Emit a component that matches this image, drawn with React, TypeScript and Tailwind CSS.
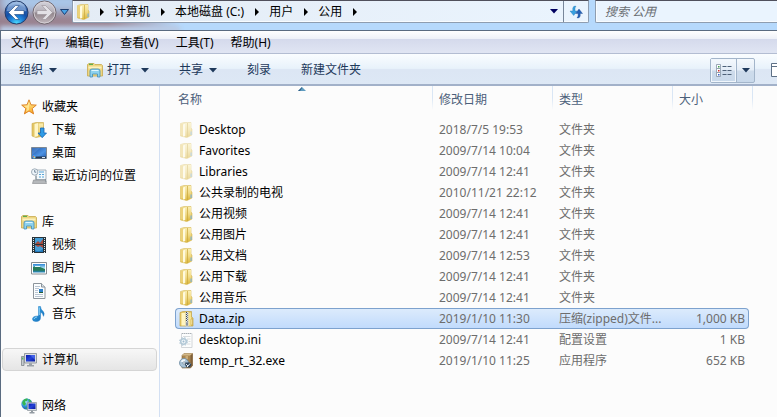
import React from "react";

const Svg = ({ children, w = 16, h = 16 }: { children: React.ReactNode; w?: number; h?: number }) => (
  <svg width={w} height={h} viewBox={`0 0 ${w} ${h}`} className="block shrink-0" aria-hidden="true">
    {children}
  </svg>
);

const Gradients = () => (
  <svg width="0" height="0" className="absolute" aria-hidden="true">
    <defs>
      <linearGradient id="gold" x1="0" x2="0" y1="0" y2="1">
        <stop offset="0" stopColor="#f3e39c" />
        <stop offset="1" stopColor="#d9b843" />
      </linearGradient>
      <linearGradient id="flap" x1="0" x2="0" y1="0" y2="1">
        <stop offset="0" stopColor="#fbeeb0" />
        <stop offset="0.5" stopColor="#f0d984" />
        <stop offset="1" stopColor="#dcb83e" />
      </linearGradient>
      <radialGradient id="back" cx="0.5" cy="0.98" r="0.95">
        <stop offset="0" stopColor="#4fe0ff" />
        <stop offset="0.3" stopColor="#1f86dc" />
        <stop offset="0.55" stopColor="#1450a8" />
        <stop offset="0.8" stopColor="#2a5fae" />
        <stop offset="1" stopColor="#9dbfe6" />
      </radialGradient>
      <linearGradient id="forward" x1="0" x2="0" y1="0" y2="1">
        <stop offset="0" stopColor="#d6d5dd" />
        <stop offset="0.48" stopColor="#b3aeb6" />
        <stop offset="0.52" stopColor="#92878d" />
        <stop offset="1" stopColor="#c2b8be" />
      </linearGradient>
      <linearGradient id="screen" x1="0" x2="1" y1="0" y2="1">
        <stop offset="0" stopColor="#0a1cae" />
        <stop offset="0.5" stopColor="#2342d8" />
        <stop offset="1" stopColor="#0a1a9c" />
      </linearGradient>
      <linearGradient id="desk" x1="0" x2="1" y1="0" y2="1">
        <stop offset="0" stopColor="#1c4f9f" />
        <stop offset="0.6" stopColor="#4d93e4" />
        <stop offset="1" stopColor="#255dac" />
      </linearGradient>
      <linearGradient id="star" x1="0" x2="0" y1="0" y2="1">
        <stop offset="0" stopColor="#fff3a0" />
        <stop offset="1" stopColor="#f9a51e" />
      </linearGradient>
      <linearGradient id="sky" x1="0" x2="0" y1="0" y2="1">
        <stop offset="0" stopColor="#2d86d6" />
        <stop offset="0.55" stopColor="#bfeef5" />
        <stop offset="0.6" stopColor="#23704d" />
        <stop offset="1" stopColor="#2c8bc4" />
      </linearGradient>
      <linearGradient id="note" x1="0" x2="1" y1="0" y2="1">
        <stop offset="0" stopColor="#45b4ee" />
        <stop offset="1" stopColor="#0d66b4" />
      </linearGradient>
      <radialGradient id="globe" cx="0.35" cy="0.3" r="0.8">
        <stop offset="0" stopColor="#c8f0ff" />
        <stop offset="0.5" stopColor="#2f92dc" />
        <stop offset="1" stopColor="#11449a" />
      </radialGradient>
    </defs>
  </svg>
);

const Folder = () => (
  <Svg>
    <path d="M1.500 1.500 5 .5h7V6l1 1v6l-5 2.500-6.500-1.500z" fill="url(#gold)" stroke="#d6bb5c" strokeWidth=".6" />
    <path d="M1.500 2H4v11.500H1.500z" fill="#ecd27a" />
    <path d="M4 2.500 6.500 1.500v12.500l-2.500.5z" fill="#fffadd" />
    <path d="M6.500 1.500 9 .7v13.800l-2.500 1z" fill="url(#flap)" />
    <path d="M8.500 1v14" stroke="#c9a63a" strokeWidth=".7" />
    <path d="M9 1h3v12l-3 1.800z" fill="url(#flap)" />
    <path d="M11.500 9.500h1.200v3.500h-1.200z" fill="#7fb4dd" />
  </Svg>
);

const LibraryFolder = () => (
  <Svg>
    <path d="M.5 2.500 2 1.500h5l1 1h6.500l1 1v10.500H.5z" fill="#eed680" stroke="#c8a94e" strokeWidth=".8" />
    <path d="M2 2.300h4" stroke="#37a440" />
    <path d="M1.500 4.500h13v2h-13z" fill="#fbf1bd" />
    <path d="M3 15V9q0-2 2-2h6q2 0 2 2v6h-2.500v-3h-5v3z" fill="#8ed2ee" stroke="#438eb9" strokeWidth=".8" />
    <path d="M4.500 8.500h7" stroke="#dff7ff" />
  </Svg>
);

const Star = () => (
  <Svg>
    <path d="m8 .8 2 5 5.300.3-4.100 3.500 1.400 5.300L8 12l-4.600 2.900 1.400-5.300L.7 6.100 6 5.800z" fill="url(#star)" stroke="#d97a1c" strokeWidth=".9" strokeLinejoin="round" />
    <path d="M8 3v8L5 13l1-4-3-2.300 4-.2z" fill="#fff6b8" opacity=".6" />
  </Svg>
);

const Download = () => (
  <Svg>
    <path d="M1 1.500 5 .5h7.500V14L5 15.500 1 14z" fill="#e3c665" stroke="#c9a94a" strokeWidth=".6" />
    <path d="M3.500 2 7 1v13l-3.500 1z" fill="#fff6c8" />
    <path d="M7.500 1.500h4.500v12l-4.500 1z" fill="url(#flap)" />
    <path d="M9.500 6h3.500v5h2.500L11.200 15.700 7 11h2.500z" fill="#2f9be6" stroke="#1766b4" strokeWidth=".8" />
  </Svg>
);

const Desktop = () => (
  <Svg>
    <path d="M.5 2.500h15v11H.5z" fill="url(#desk)" stroke="#7d8894" />
    <path d="M1 11.500h14v2H1z" fill="#26384f" />
    <path d="m1 10 8-7H1z" fill="#79aeea" opacity=".3" />
    <circle cx="3" cy="12" r="1.800" fill="#54a9ee" />
    <path d="M2 11h1v1H2z" fill="#f06437" />
    <path d="M3 12h1v1H3z" fill="#ffd94d" />
    <path d="M11 12.500h3" stroke="#dbe5ef" />
  </Svg>
);

const Recent = () => (
  <Svg>
    <path d="M5 2h10v9.500H5z" fill="#f3f8fb" stroke="#8fa0ac" strokeWidth=".8" />
    <path d="M8 4h5M8 6.500h2M11 6.500h2M8 9h2M11 9h2" stroke="#55a4d8" />
    <path d="M2.500 12h12l1 3.500h-14z" fill="#b5b8bb" stroke="#84888c" strokeWidth=".6" />
    <path d="M5 8v4M14.500 11l.5 3" stroke="#848f98" />
    <circle cx="3.700" cy="4" r="3.200" fill="#edf5fb" stroke="#8c9aa7" strokeWidth=".8" />
    <path d="M3.700 2v2.200h1.600" stroke="#536b82" strokeWidth=".8" fill="none" />
  </Svg>
);

const Video = () => (
  <Svg>
    <path d="M1 0h14v16H1z" fill="#27343b" />
    <path d="M4 1h8v6H4zM4 8h8v7H4z" fill="#459ed7" />
    <path d="m4 7 3-3 2 2 3-4v5zM4 8l3 2 2-1 3 2V8z" fill="#a54b3f" />
    <path d="M4 13q4 3 8-1v3H4z" fill="#2277b9" />
    <path d="M2.500 1v15M13.500 1v15" stroke="#e5e9ea" strokeDasharray="1 1" />
  </Svg>
);

const Pictures = () => (
  <Svg>
    <path d="M.5 2.500h15v11.500H.5z" fill="#fff" stroke="#858c91" />
    <path d="M2 4h12v8.500H2z" fill="url(#sky)" />
    <path d="M2 7q4-2 12 2v1.500H2z" fill="#277c5a" />
    <path d="M4 6.500h5" stroke="#e9faff" />
  </Svg>
);

const Documents = () => (
  <Svg>
    <path d="M2.500.5h8l3.500 3.500v11.500H2.500z" fill="#fbfdfe" stroke="#8c949b" />
    <path d="M10.500.5V4H14" fill="#d8e2ea" stroke="#8c949b" />
    <path d="M4 3.500h5M4 5.500h4M4 7.500h3M4 9.500h3M4 11.500h8M4 13.500h8" stroke="#a9b6c6" strokeWidth=".8" />
    <path d="M8 6h4v4H8z" fill="#2f80cc" />
    <path d="M8 9h4v1H8z" fill="#235e36" />
  </Svg>
);

const Music = () => (
  <Svg>
    <path d="M7.500.5h2q0 3 2.500 4.800 2 2 .5 5-.3-3-3-4.300v5.500q0 4-4.500 4-3.500 0-3.500-2.500 0-3 6-3z" fill="url(#note)" stroke="#1d7bc4" strokeWidth=".5" />
    <path d="M8.300 1.500v7.500M3 13q1-2 3-2" stroke="#a6e2ff" strokeWidth=".8" fill="none" />
  </Svg>
);

const Computer = () => (
  <Svg>
    <path d="M.5 4.500h2.500v9H.5z" fill="#c6ccd0" stroke="#727a80" strokeWidth=".7" />
    <path d="M1.700 5.500v2" stroke="#3cb94a" />
    <path d="M3.500 1.500h12v9.500h-12z" fill="#d9dde1" stroke="#81888f" strokeWidth=".8" />
    <path d="M5 3h9v6.500H5z" fill="url(#screen)" />
    <path d="m9 3 5 5V3z" fill="#6d8cff" opacity=".45" />
    <path d="M8 11.300h3V13h2v1.500H6V13h2z" fill="#9ba2a8" />
  </Svg>
);

const Network = () => (
  <Svg>
    <circle cx="5.800" cy="6" r="5.500" fill="url(#globe)" />
    <path d="M2 2.500Q4 0 7 .8L6 3 4 3.500 5 6 3 8 1 5zM8 1l2.500 2L9 4.500 7.500 3zM4 9l2 1-.5 1.500z" fill="#35b553" />
    <path d="M6.500 4.500h9v8h-9z" fill="#d5dade" stroke="#8a9299" strokeWidth=".7" />
    <path d="M7.500 5.500h7V11h-7z" fill="url(#screen)" />
    <path d="M10 12.700h2v1.300h1.500v1.500h-5V14H10z" fill="#929aa1" />
  </Svg>
);

const Zip = () => (
  <Svg>
    <path d="M1 1.500 4 .5h8.500V6l1.500 1v8H1z" fill="#e8cd6c" stroke="#c2a043" strokeWidth=".7" />
    <path d="M2.500 2H6v12.500H2.500z" fill="#fff5c2" />
    <path d="M10 2h2v12.500h-2z" fill="#f7e48f" />
    <path d="M6.500 1h3v14h-3z" fill="#dce2e8" />
    <path d="M7.500 1v10" stroke="#3b4756" strokeDasharray="1 1" />
    <path d="M8.500 2v9" stroke="#6f7c8b" strokeDasharray="1 1" />
    <path d="M7 11h2v4H7z" fill="#6f7a86" stroke="#e8edf2" strokeWidth=".5" />
    <path d="M12 8h1.500v6H12z" fill="#fff0ae" stroke="#b7963d" strokeWidth=".5" />
  </Svg>
);

const Ini = () => (
  <Svg>
    <path d="M2.500 1.500H13v14H2.500z" fill="#fcfdfd" stroke="#c9cdd0" strokeWidth=".8" />
    <path d="M3 1.500h10" stroke="#a9b0b5" strokeDasharray="1 1" />
    <path d="M4 4.500h7.500M8 7h3.500M9.500 9.500h2M8 12h3.500" stroke="#d8dcde" />
    <circle cx="4.500" cy="9.500" r="2.800" fill="#f2f7fa" stroke="#b2c8d6" strokeWidth="1.500" />
    <circle cx="4.500" cy="9.500" r="4" fill="none" stroke="#b2c8d6" strokeDasharray="1.500 1.700" />
    <circle cx="4.500" cy="9.500" r="1" fill="#9fbace" />
  </Svg>
);

const Exe = () => (
  <Svg>
    <path d="m3 2.500 2-2h8.500v12l-2 2.500H3z" fill="#a9854f" stroke="#85663a" strokeWidth=".6" />
    <path d="m3 2.500 2-2h8.500l-2 2z" fill="#d3b98a" />
    <path d="M11.500 2.500V15l2-2.500V.5z" fill="#80603a" />
    <path d="M6.500 3h2.500v3H6.500z" fill="#c9ab78" />
    <circle cx="5" cy="10" r="4.500" fill="#a9c4d8" stroke="#6d8ca3" strokeWidth=".8" />
    <path d="M1.500 8.500q2-3 5-2l-1.500 3z" fill="#f2faff" />
    <circle cx="5" cy="10" r="1.200" fill="#fff" stroke="#5a7388" strokeWidth=".6" />
    <path d="M6.500 9.500h4.500l1.500 2-1.500 3H8L6 12z" fill="#33475c" />
    <path d="m7 11 2 2 2-2.500M8 14l1-1" stroke="#e3edf5" fill="none" />
  </Svg>
);

const Crumb = () => (
  <svg width="4" height="8" viewBox="0 0 4 8" className="shrink-0" aria-hidden="true">
    <path d="M0 0v8l4-4z" fill="#000" />
  </svg>
);

const Down = ({ fill = "#1e395b" }: { fill?: string }) => (
  <svg width="8" height="5" viewBox="0 0 8 5" className="shrink-0" aria-hidden="true">
    <path d="M0 0h8L4 4.500z" fill={fill} />
  </svg>
);

const crumbs = ["计算机", "本地磁盘 (C:)", "用户", "公用"];
const menus = ["文件(F)", "编辑(E)", "查看(V)", "工具(T)", "帮助(H)"];

const navGroups = [
  {
    label: "收藏夹",
    icon: <Star />,
    items: [
      { label: "下载", icon: <Download /> },
      { label: "桌面", icon: <Desktop /> },
      { label: "最近访问的位置", icon: <Recent /> },
    ],
  },
  {
    label: "库",
    icon: <LibraryFolder />,
    items: [
      { label: "视频", icon: <Video /> },
      { label: "图片", icon: <Pictures /> },
      { label: "文档", icon: <Documents /> },
      { label: "音乐", icon: <Music /> },
    ],
  },
  { label: "计算机", icon: <Computer />, items: [], current: true },
  { label: "网络", icon: <Network />, items: [] },
];

type Entry = { name: string; date: string; type: string; size?: string; icon?: React.ReactNode; faded?: boolean; selected?: boolean };

const files: Entry[] = [
  { name: "Desktop", date: "2018/7/5 19:53", type: "文件夹", faded: true },
  { name: "Favorites", date: "2009/7/14 10:04", type: "文件夹", faded: true },
  { name: "Libraries", date: "2009/7/14 12:41", type: "文件夹", faded: true },
  { name: "公共录制的电视", date: "2010/11/21 22:12", type: "文件夹" },
  { name: "公用视频", date: "2009/7/14 12:41", type: "文件夹" },
  { name: "公用图片", date: "2009/7/14 12:41", type: "文件夹" },
  { name: "公用文档", date: "2009/7/14 12:53", type: "文件夹" },
  { name: "公用下载", date: "2009/7/14 12:41", type: "文件夹" },
  { name: "公用音乐", date: "2009/7/14 12:41", type: "文件夹" },
  { name: "Data.zip", date: "2019/1/10 11:30", type: "压缩(zipped)文件...", size: "1,000 KB", icon: <Zip />, selected: true },
  { name: "desktop.ini", date: "2009/7/14 12:41", type: "配置设置", size: "1 KB", icon: <Ini /> },
  { name: "temp_rt_32.exe", date: "2019/1/10 11:25", type: "应用程序", size: "652 KB", icon: <Exe /> },
];

function AddressRow() {
  return (
    <header className="relative flex h-[30px] items-start overflow-hidden bg-[#b6d9fc]">
      <div className="absolute inset-y-0 left-0 w-[180px] bg-linear-to-r from-[#98818f] via-[#9c8390] via-60% to-[#b6d9fc]" />
      <div className="absolute -top-2 left-0 h-5 w-20 bg-[#a9c6e8] blur-[5px]" />
      <div className="absolute top-[26px] left-0 h-2 w-[180px] bg-[#b9cbe6] blur-[2px]" />
      <nav aria-label="历史" className="relative flex h-6 w-[72px] shrink-0 items-center pl-1">
        <button aria-label="后退" className="shrink-0">
          <Svg w={25} h={25}>
            <circle cx="12.500" cy="12.500" r="11.500" fill="url(#back)" stroke="#243b68" />
            <path d="M2.500 11Q4 2.500 12.500 2.200T22.500 11q-10 2-20 0z" fill="#dcebfa" opacity=".4" />
            <path d="M4.500 12.500 11.500 5.500h3.700L10.500 10.500h9.500v4h-9.500l4.700 5h-3.700z" fill="#fff" stroke="#1b4680" strokeWidth=".6" />
          </Svg>
        </button>
        <button aria-label="前进" className="ml-[3px] shrink-0">
          <Svg w={25} h={25}>
            <circle cx="12.500" cy="12.500" r="11.500" fill="url(#forward)" stroke="#6f666e" />
            <circle cx="12.500" cy="12.500" r="10.500" fill="none" stroke="#dad5da" strokeWidth=".8" />
            <path d="M20.500 12.500 13.500 5.500H9.800l4.700 5H5v4h9.500l-4.700 5h3.700z" fill="#e2e0e5" stroke="#978e95" strokeWidth=".6" />
          </Svg>
        </button>
        <button aria-label="最近的页面" className="ml-[3px] shrink-0">
          <Svg w={9} h={6}>
            <path d="M.5.5h8L4.500 5.500z" fill="#49a3e6" stroke="#1c3e70" />
          </Svg>
        </button>
      </nav>
      <div className="relative flex h-[23px] min-w-0 flex-1 items-center overflow-hidden rounded-b-xs border border-t-[#50505c] border-[#8e9db0] bg-linear-to-r from-[#e4ecf5] to-[#eaf4fe] pl-[3px] shadow-[inset_0_-1px_0_#f8fcff,inset_1px_0_0_#f8fcff]">
        <Folder />
        <ol className="flex flex-1 items-center gap-[11px] pl-2 whitespace-nowrap">
          {crumbs.map((c) => (
            <li key={c} className="flex items-center gap-[10px]">
              <Crumb />
              <a href="#">{c}</a>
            </li>
          ))}
          <li><Crumb /></li>
        </ol>
        <button aria-label="以前的位置" className="px-[5px]"><Down fill="#000060" /></button>
        <button aria-label="刷新" className="flex h-full w-[25px] items-center justify-center border-l border-[#77869a]">
          <Svg w={14} h={14}>
            <path d="M7 1.200Q4.500.5 3.800 3v3H1l3.700 4.500L8 6H6V3.500Q6 2 7 1.200z" fill="#39a1e0" stroke="#2279b8" strokeWidth=".4" />
            <path d="M8 12.800q2.500.8 3.200-1.800V8.500h2.300L10 4 6.500 8.500h2.600v2.300Q9 12 8 12.800z" fill="#2461b6" stroke="#1c4c94" strokeWidth=".4" />
          </Svg>
        </button>
      </div>
      <input
        aria-label="搜索 公用"
        placeholder="搜索 公用"
        className="relative ml-[6px] h-[23px] w-[182px] shrink-0 rounded-bl-xs border border-r-0 border-t-[#50505c] border-[#8e9db0] bg-[#eaf4fe] pl-[9px] text-xs italic shadow-[inset_0_-1px_0_#f8fcff,inset_1px_0_0_#f8fcff] outline-none placeholder:text-[#6b6f74]"
      />
    </header>
  );
}

function Toolbar() {
  return (
    <div className="flex h-8 items-center overflow-hidden border-b-2 border-[#a2b1c9] bg-[linear-gradient(#fafdff,#e8f2fb_48%,#dce6f4_52%,#dde8f5)] pt-[2px] pl-[18px] whitespace-nowrap text-[#1e395b]">
      <button className="flex items-center gap-[6px]">组织<Down /></button>
      <button className="ml-[30px] flex items-center gap-1"><LibraryFolder />打开</button>
      <button aria-label="打开选项" className="ml-[10px]"><Down /></button>
      <button className="ml-[30px] flex items-center gap-[6px]">共享<Down /></button>
      <button className="ml-[30px]">刻录</button>
      <button className="ml-[30px]">新建文件夹</button>
      <div className="ml-auto flex h-[25px] w-[45px] shrink-0 rounded-xs border border-[#a3b5ca] bg-[linear-gradient(#f5f9fd,#e4edf7_48%,#cddbeb_52%,#c9d9eb)]">
        <button aria-label="更改视图" className="flex flex-1 items-center justify-center shadow-[inset_0_0_0_1px_#f0f6fc]">
          <Svg w={16} h={13}>
            {[["#3a9a4a", 0], ["#d03030", 4], ["#3560c8", 8]].map(([c, y]) => (
              <g key={c as string} transform={`translate(0 ${y})`}>
                <path d="M.5.5h4v4h-4z" fill="#fff" stroke="#8594a6" strokeWidth=".8" />
                <path d="M2 2h1.500v1.500H2z" fill={c as string} />
                <path d="M6.500 2.500h4M11.500 2.500h4" stroke="#4d6077" />
              </g>
            ))}
          </Svg>
        </button>
        <button aria-label="更多视图" className="flex w-[18px] items-center justify-center border-l border-[#a3b5ca]"><Down /></button>
      </div>
      <button aria-label="预览窗格" className="ml-4 w-[6px] shrink-0 overflow-hidden">
        <Svg w={16} h={14}>
          <path d="M.5.5h15v13H.5z" fill="#fff" stroke="#5d7086" />
          <path d="M1 3.500h14" stroke="#5d7086" />
        </Svg>
      </button>
    </div>
  );
}

function Sidebar() {
  return (
    <nav aria-label="导航窗格" className="flex w-[159px] shrink-0 flex-col gap-[23px] border-r border-[#d3e0f3] pt-[9px] pr-[2px] pl-px whitespace-nowrap">
      {navGroups.map((g) => (
        <ul key={g.label}>
          <li>
            <a
              href="#"
              aria-current={g.current ? "page" : undefined}
              className={`flex h-[23px] items-center gap-[5px] rounded-sm border pl-[18px] ${g.current ? "border-[#d5d5d5] bg-linear-to-b from-[#f7f7f7] to-[#e5e5e5]" : "border-transparent"}`}
            >
              {g.icon}
              {g.label}
            </a>
          </li>
          {g.items.map((i) => (
            <li key={i.label}>
              <a href="#" className="flex h-[23px] items-center gap-[5px] pl-[29px]">
                {i.icon}
                {i.label}
              </a>
            </li>
          ))}
        </ul>
      ))}
    </nav>
  );
}

function FileList() {
  const th = "h-[33px] bg-[linear-gradient(#d9e6f5,#d9e6f5_50%,transparent)] bg-[length:1px_24px] bg-right-top bg-no-repeat pt-[6px] text-left align-top font-normal";
  const sel = "border-y border-[#7da2ce] bg-linear-to-b from-[#dcebfc] to-[#c1dbfc]";
  return (
    <main className="min-w-0 flex-1 overflow-hidden pl-[15px]">
      <table className="w-[578px] table-fixed border-separate border-spacing-0 whitespace-nowrap text-[#6d6d6d]">
        <colgroup>
          <col className="w-[258px]" />
          <col className="w-[120px]" />
          <col className="w-[120px]" />
          <col className="w-[76px]" />
          <col className="w-1" />
        </colgroup>
        <thead className="text-[#4c607a]">
          <tr>
            <th scope="col" aria-sort="ascending" className={`relative pl-[3px] ${th}`}>
              名称
              <svg width="8" height="4" viewBox="0 0 8 4" className="absolute top-px left-[123px]" aria-hidden="true">
                <path d="M0 4 4 0l4 4z" fill="#5f9cc0" />
                <path d="M0 4 4 0v1L2 4z" fill="#2f5f86" />
              </svg>
            </th>
            <th scope="col" className={`pl-[6px] ${th}`}>修改日期</th>
            <th scope="col" className={`pl-[6px] ${th}`}>类型</th>
            <th scope="col" className="h-[33px] pt-[6px] pl-[6px] text-left align-top font-normal">大小</th>
            <td className={th} />
          </tr>
        </thead>
        <tbody>
          {files.map((f) => (
            <tr key={f.name} aria-selected={f.selected ? true : undefined} className="h-[21px]">
              <td className={`p-0 pl-[3px] text-black ${f.selected ? `rounded-l-sm border-l ${sel}` : "border-l border-transparent"}`}>
                <span className="flex items-center gap-1">
                  <span className={f.faded ? "opacity-50" : ""}>{f.icon ?? <Folder />}</span>
                  {f.name}
                </span>
              </td>
              <td className={`p-0 pl-[6px] ${f.selected ? sel : ""}`}>{f.date}</td>
              <td className={`p-0 pl-[6px] ${f.selected ? sel : ""}`}>{f.type}</td>
              <td className={`p-0 pr-[3px] text-right ${f.selected ? `rounded-r-sm border-r ${sel}` : "border-r border-transparent"}`}>{f.size}</td>
              <td className="p-0" />
            </tr>
          ))}
        </tbody>
      </table>
    </main>
  );
}

export default function App() {
  return (
    <div className="flex min-h-screen flex-col overflow-hidden bg-[#fcfcfc] font-['Noto_Sans','Noto_Sans_CJK_SC',sans-serif] text-xs leading-4 text-black">
      <Gradients />
      <AddressRow />
      <div className="flex flex-1 flex-col border-t border-l border-[#5a6b80]">
        <div role="menubar" className="flex h-[23px] items-center gap-[17px] border-b border-[#b3bdd2] bg-[linear-gradient(#ffffff,#eef1f8_36%,#d5daec_38%,#e0e5f3)] pt-[2px] pl-[10px] whitespace-nowrap">
          {menus.map((m) => (
            <button key={m} role="menuitem">{m}</button>
          ))}
        </div>
        <Toolbar />
        <div className="flex flex-1">
          <Sidebar />
          <FileList />
        </div>
      </div>
    </div>
  );
}
